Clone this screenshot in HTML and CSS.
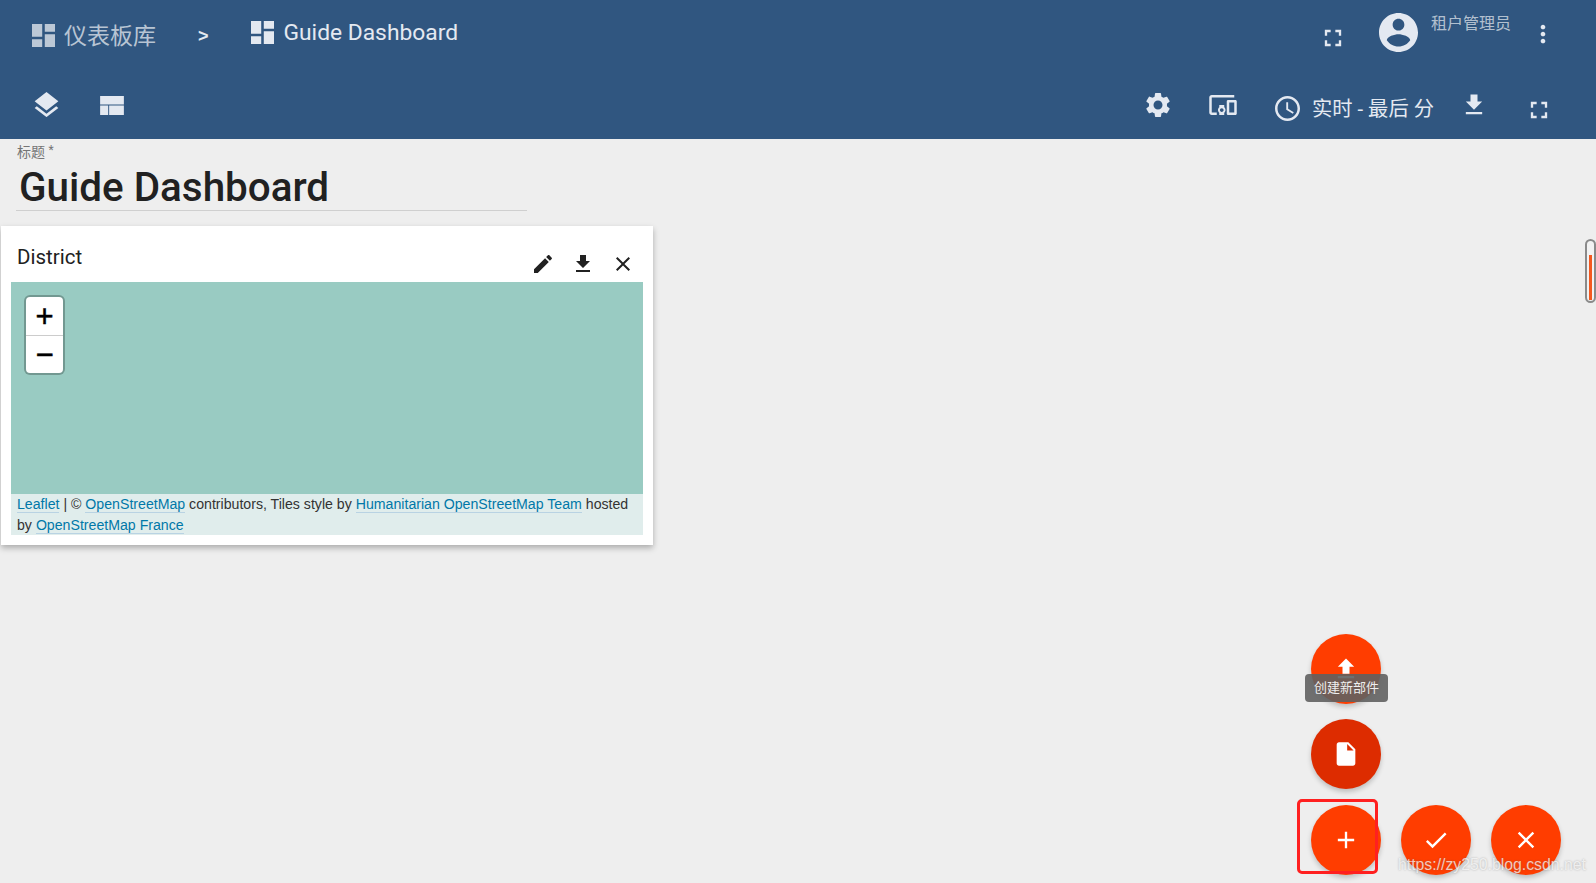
FILE: index.html
```html
<!DOCTYPE html>
<html lang="zh-CN">
<head>
    <meta charset="UTF-8">
    <title>Guide Dashboard</title>
    <link rel="stylesheet" href="styles.css">
</head>
<body>

<header class="toolbar">
    <div class="toolbar-row row-top">
        <div class="crumb crumb-parent">
            <svg class="icon icon-24" viewBox="3 3 18 18"><path d="M3 13h8V3H3v10zm0 8h8v-6H3v6zm10 0h8V11h-8v10zm0-18v6h8V3h-8z"/></svg>
            <span>仪表板库</span>
        </div>
        <span class="crumb-sep">&gt;</span>
        <div class="crumb crumb-current">
            <svg class="icon icon-24" viewBox="3 3 18 18"><path d="M3 13h8V3H3v10zm0 8h8v-6H3v6zm10 0h8V11h-8v10zm0-18v6h8V3h-8z"/></svg>
            <span>Guide Dashboard</span>
        </div>
        <div class="spacer"></div>
        <svg class="icon icon-full icon-full-top" viewBox="0 0 24 24"><path d="M7 14H5v5h5v-2H7v-3zm-2-4h2V7h3V5H5v5zm12 7h-3v2h5v-5h-2v3zM14 5v2h3v3h2V5h-5z"/></svg>
        <svg class="icon avatar" viewBox="2 2 20 20"><path d="M12 2C6.48 2 2 6.48 2 12s4.48 10 10 10 10-4.48 10-10S17.52 2 12 2zm0 3c1.66 0 3 1.34 3 3s-1.34 3-3 3-3-1.34-3-3 1.34-3 3-3zm0 14.2c-2.5 0-4.71-1.28-6-3.22.03-1.99 4-3.08 6-3.08 1.99 0 5.97 1.09 6 3.08-1.29 1.94-3.5 3.22-6 3.22z"/></svg>
        <span class="user-name">租户管理员</span>
        <svg class="icon icon-more" viewBox="0 0 24 24"><path d="M12 8c1.1 0 2-.9 2-2s-.9-2-2-2-2 .9-2 2 .9 2 2 2zm0 2c-1.1 0-2 .9-2 2s.9 2 2 2 2-.9 2-2-.9-2-2-2zm0 6c-1.1 0-2 .9-2 2s.9 2 2 2 2-.9 2-2-.9-2-2-2z"/></svg>
    </div>
    <div class="toolbar-row row-bottom">
        <svg class="icon icon-layers" viewBox="3 2 18 19"><path d="M11.99 18.54l-7.37-5.73L3 14.07l9 7 9-7-1.63-1.27-7.38 5.74zM12 16l7.36-5.73L21 9l-9-7-9 7 1.63 1.27L12 16z"/></svg>
        <svg class="icon icon-layout" viewBox="0 0 25 20"><path d="M0 0h25v9H0zM0 10h8.5v10H0zM9.500 10H25v10H9.500z"/></svg>
        <div class="spacer"></div>
        <svg class="icon icon-gear" viewBox="0 0 24 24"><path d="M19.14 12.94c.04-.3.06-.61.06-.94 0-.32-.02-.64-.07-.94l2.03-1.58c.18-.14.23-.41.12-.61l-1.92-3.32c-.12-.22-.37-.29-.59-.22l-2.39.96c-.5-.38-1.03-.7-1.62-.94l-.36-2.54c-.04-.24-.24-.41-.48-.41h-3.84c-.24 0-.43.17-.47.41l-.36 2.54c-.59.24-1.13.57-1.62.94l-2.39-.96c-.22-.08-.47 0-.59.22L2.74 8.87c-.12.21-.08.47.12.61l2.03 1.58c-.05.3-.09.63-.09.94s.02.64.07.94l-2.03 1.58c-.18.14-.23.41-.12.61l1.92 3.32c.12.22.37.29.59.22l2.39-.96c.5.38 1.03.7 1.62.94l.36 2.54c.05.24.24.41.48.41h3.84c.24 0 .44-.17.47-.41l.36-2.54c.59-.24 1.13-.56 1.62-.94l2.39.96c.22.08.47 0 .59-.22l1.92-3.32c.12-.22.07-.47-.12-.61l-2.01-1.58zM12 15.6c-1.98 0-3.6-1.62-3.6-3.6s1.62-3.6 3.6-3.6 3.6 1.62 3.6 3.6-1.62 3.6-3.6 3.6z"/></svg>
        <svg class="icon icon-devices" viewBox="0 0 24 24"><path d="M3 6h18V4H3c-1.1 0-2 .9-2 2v12c0 1.1.9 2 2 2h4v-2H3V6zm10 6H9v1.78c-.61.55-1 1.33-1 2.22s.39 1.67 1 2.22V20h4v-1.78c.61-.55 1-1.34 1-2.22s-.39-1.67-1-2.22V12zm-2 5.5c-.83 0-1.5-.67-1.5-1.5s.67-1.5 1.5-1.5 1.5.67 1.5 1.5-.67 1.5-1.5 1.5zM22 8h-6c-.5 0-1 .5-1 1v10c0 .5.5 1 1 1h6c.5 0 1-.5 1-1V9c0-.5-.5-1-1-1zm-1 10h-4v-8h4v8z"/></svg>
        <svg class="icon icon-clock" viewBox="2 2 20 20"><path d="M11.99 2C6.47 2 2 6.48 2 12s4.47 10 9.99 10C17.52 22 22 17.52 22 12S17.52 2 11.99 2zM12 20c-4.42 0-8-3.58-8-8s3.58-8 8-8 8 3.58 8 8-3.58 8-8 8zm.5-13H11v6l5.25 3.15.75-1.23-4.5-2.67z"/></svg>
        <span class="time-label">实时 - 最后 分</span>
        <svg class="icon icon-save" viewBox="0 0 24 24"><path d="M19 9h-4V3H9v6H5l7 7 7-7zM5 18v2h14v-2H5z"/></svg>
        <svg class="icon icon-full icon-full-bottom" viewBox="0 0 24 24"><path d="M7 14H5v5h5v-2H7v-3zm-2-4h2V7h3V5H5v5zm12 7h-3v2h5v-5h-2v3zM14 5v2h3v3h2V5h-5z"/></svg>
    </div>
</header>

<main class="content">
    <div class="title-field">
        <label class="title-label">标题 <span class="req">*</span></label>
        <div class="title-value">Guide Dashboard</div>
    </div>

    <section class="widget">
        <div class="widget-head">
            <span class="widget-title">District</span>
            <div class="widget-actions">
                <svg class="icon" viewBox="0 0 24 24"><path d="M3 17.25V21h3.750L17.810 9.940l-3.750-3.750L3 17.250zM20.710 7.040c.390-.390.390-1.020 0-1.410l-2.340-2.340c-.390-.390-1.020-.390-1.410 0l-1.830 1.830 3.750 3.750 1.830-1.830z"/></svg>
                <svg class="icon" viewBox="0 0 24 24"><path d="M19 9h-4V3H9v6H5l7 7 7-7zM5 18v2h14v-2H5z"/></svg>
                <svg class="icon" viewBox="0 0 24 24"><path d="M19 6.410L17.590 5 12 10.590 6.410 5 5 6.410 10.590 12 5 17.590 6.410 19 12 13.410 17.590 19 19 17.590 13.410 12z"/></svg>
            </div>
        </div>
        <div class="map">
            <div class="zoom-ctrl">
                <div class="zoom-btn zoom-in">+</div>
                <div class="zoom-btn">&minus;</div>
            </div>
        </div>
        <div class="attribution">
            <a href="#">Leaflet</a> | © <a href="#">OpenStreetMap</a> contributors, Tiles style by <a href="#">Humanitarian OpenStreetMap Team</a> hosted by <a href="#">OpenStreetMap France</a>
        </div>
    </section>
</main>

<div class="scroll-thumb"><div class="scroll-fill"></div></div>

<div class="fab-area">
    <div class="fab-col">
        <button class="fab">
            <svg class="icon" viewBox="0 0 24 24"><path d="M9 16h6v-6h4l-7-7-7 7h4zm-4 2h14v2H5z"/></svg>
        </button>
        <div class="tooltip">创建新部件</div>
        <button class="fab fab-dark">
            <svg class="icon" viewBox="0 0 24 24"><path d="M6 2c-1.100 0-1.990.900-1.990 2L4 20c0 1.100.890 2 1.990 2H18c1.100 0 2-.900 2-2V8l-6-6H6zm7 7V3.500L18.500 9H13z"/></svg>
        </button>
        <div class="fab-row">
            <button class="fab fab-add">
                <svg class="icon" viewBox="0 0 24 24"><path d="M19 13h-6v6h-2v-6H5v-2h6V5h2v6h6v2z"/></svg>
                <span class="mark-box"></span>
            </button>
            <button class="fab">
                <svg class="icon" viewBox="0 0 24 24"><path d="M9 16.170L4.830 12l-1.420 1.410L9 19 21 7l-1.410-1.410z"/></svg>
            </button>
            <button class="fab">
                <svg class="icon" viewBox="0 0 24 24"><path d="M19 6.410L17.590 5 12 10.590 6.410 5 5 6.410 10.590 12 5 17.590 6.410 19 12 13.410 17.590 19 19 17.590 13.410 12z"/></svg>
            </button>
        </div>
    </div>
</div>

<div class="watermark">https://zy250.blog.csdn.net</div>

</body>
</html>
```
FILE: styles.css
```css
body {
    margin: 0;
    height: 883px;
    overflow: hidden;
    background: #eeeeee;
    font-family: Roboto, "Noto Sans CJK SC", sans-serif;
    color: #212121;
}
.icon {
    display: block;
    fill: currentColor;
    flex: none;
}
.spacer {
    flex: 1;
}

/* top bar */
.toolbar {
    height: 139px;
    background: #305680;
    color: #e4e9f1;
    display: flex;
    flex-direction: column;
}
.toolbar-row {
    display: flex;
    align-items: center;
    box-sizing: border-box;
}
.row-top {
    height: 70px;
    padding: 0 39px 0 32px;
}
.row-bottom {
    height: 69px;
    padding: 8px 43px 0 34px;
}
.crumb {
    display: flex;
    align-items: center;
}
.icon-24 {
    width: 23px;
    height: 23px;
}
.crumb-parent {
    color: rgba(255, 255, 255, 0.68);
    font-size: 23px;
}
.crumb-parent span {
    margin-left: 9px;
    margin-top: -3px;
}
.crumb-sep {
    font-size: 18px;
    font-weight: bold;
    margin-left: 42px;
    margin-top: 3px;
    font-family: "Liberation Sans", sans-serif;
}
.crumb-current {
    font-size: 22.800px;
    margin-left: 42px;
    margin-top: -5px;
}
.crumb-current span {
    margin-left: 10px;
}
.icon-full {
    width: 28px;
    height: 28px;
}
.icon-full-top {
    margin-top: 6px;
}
.avatar {
    width: 39px;
    height: 39px;
    margin-left: 32px;
    margin-top: -6px;
}
.user-name {
    font-size: 16px;
    color: rgba(255, 255, 255, 0.65);
    margin-left: 13px;
    margin-top: -26px;
}
.icon-more {
    width: 28px;
    height: 28px;
    margin-left: 18px;
    margin-top: -2px;
}
.icon-layers {
    width: 25px;
    height: 25px;
    margin-top: -8px;
}
.icon-layout {
    width: 24px;
    height: 19px;
    margin-left: 41px;
    margin-top: -7px;
}
.icon-gear {
    width: 30px;
    height: 30px;
    margin-top: -7px;
}
.icon-devices {
    width: 30px;
    height: 30px;
    margin-left: 35px;
    margin-top: -7px;
}
.icon-clock {
    width: 25px;
    height: 25px;
    margin-left: 37px;
    margin-top: -1px;
}
.time-label {
    font-size: 20.3px;
    margin-left: 12px;
    margin-top: -3px;
    white-space: nowrap;
}
.icon-save {
    width: 28px;
    height: 28px;
    margin-left: 26px;
    margin-top: -7px;
}
.icon-full-bottom {
    margin-left: 37px;
    margin-top: 3px;
}

/* title */
.title-field {
    width: 511px;
    margin-left: 16px;
    height: 71px;
    border-bottom: 1px solid #cfcfcf;
}
.title-label {
    display: block;
    font-size: 14px;
    line-height: 16px;
    padding: 3px 0 0 1px;
    color: #757575;
}
.req {
    font-size: 12px;
    vertical-align: 3px;
}
.title-value {
    font-size: 40.4px;
    font-weight: 500;
    line-height: 48px;
    padding: 4px 0 0 3px;
    color: #212121;
}

/* widget */
.widget {
    width: 652px;
    height: 319px;
    margin: 15px 0 0 1px;
    padding: 0 10px;
    box-sizing: border-box;
    background: white;
    box-shadow: 0 3px 6px rgba(0, 0, 0, 0.28);
}
.widget-head {
    height: 56px;
    display: flex;
    justify-content: space-between;
    padding-left: 6px;
}
.widget-title {
    font-size: 20.5px;
    line-height: 24px;
    padding-top: 19px;
}
.widget-actions {
    display: flex;
    gap: 16px;
    padding: 26px 8px 0 0;
}
.widget-actions .icon {
    width: 24px;
    height: 24px;
    fill: #212121;
}
.map {
    height: 212px;
    background: #99cbc2;
    padding: 15px 0 0 15px;
    box-sizing: border-box;
}
.zoom-ctrl {
    width: 37px;
    border-radius: 4px;
    background: white;
    box-shadow: 0 0 0 2px rgba(0, 0, 0, 0.25);
}
.zoom-btn {
    height: 37px;
    text-align: center;
    font: normal 31px/38px "Liberation Sans", sans-serif;
    -webkit-text-stroke: 0.5px black;
    color: black;
}
.zoom-in {
    height: 38px;
    line-height: 40px;
    border-bottom: 1px solid #cccccc;
}
.attribution {
    background: #e0edec;
    font-family: "Liberation Sans", Arial, sans-serif;
    font-size: 14.15px;
    line-height: 21px;
    padding: 0 6px;
    height: 41px;
    color: #333333;
    overflow: hidden;
}
.attribution a {
    color: #0078a8;
    text-decoration: none;
    border-bottom: 1px solid #b9d3e3;
}

/* scrollbar */
.scroll-thumb {
    position: absolute;
    top: 239px;
    left: 1585px;
    width: 11px;
    height: 64px;
    box-sizing: border-box;
    border: 2px solid #8a8a8a;
    border-radius: 6px;
    padding: 14px 2px 1px;
    background: #f2f2f2;
}
.scroll-fill {
    height: 100%;
    background: #f4581f;
}

/* action buttons */
.fab-area {
    position: absolute;
    left: 1311px;
    top: 634px;
}
.fab-col {
    position: relative;
    display: flex;
    flex-direction: column;
    gap: 15px;
}
.fab-row {
    display: flex;
    gap: 20px;
    margin-top: 1px;
}
.fab {
    position: relative;
    width: 70px;
    height: 70px;
    border: none;
    border-radius: 50%;
    padding: 0;
    background: #ff3d00;
    color: white;
    display: flex;
    align-items: center;
    justify-content: center;
    box-shadow: 0 3px 5px rgba(0, 0, 0, 0.2);
}
.fab .icon {
    width: 28px;
    height: 28px;
}
.fab-dark {
    background: #dd2c00;
}
.mark-box {
    position: absolute;
    left: -14px;
    top: -6px;
    width: 75px;
    height: 69px;
    border: 3px solid #ff2020;
    border-radius: 5px;
}
.tooltip {
    position: absolute;
    left: -6px;
    top: 40px;
    width: 83px;
    height: 28px;
    line-height: 27px;
    text-align: center;
    font-size: 13px;
    color: #eeeeee;
    background: rgba(97, 97, 97, 0.9);
    border-radius: 4px;
}
.watermark {
    position: absolute;
    left: 1398px;
    top: 854px;
    font-family: "Liberation Sans", sans-serif;
    font-size: 15.800px;
    line-height: 21px;
    color: rgba(255, 255, 255, 0.72);
    text-shadow: 0 0 2px rgba(90, 90, 90, 0.45);
    white-space: nowrap;
}
```
